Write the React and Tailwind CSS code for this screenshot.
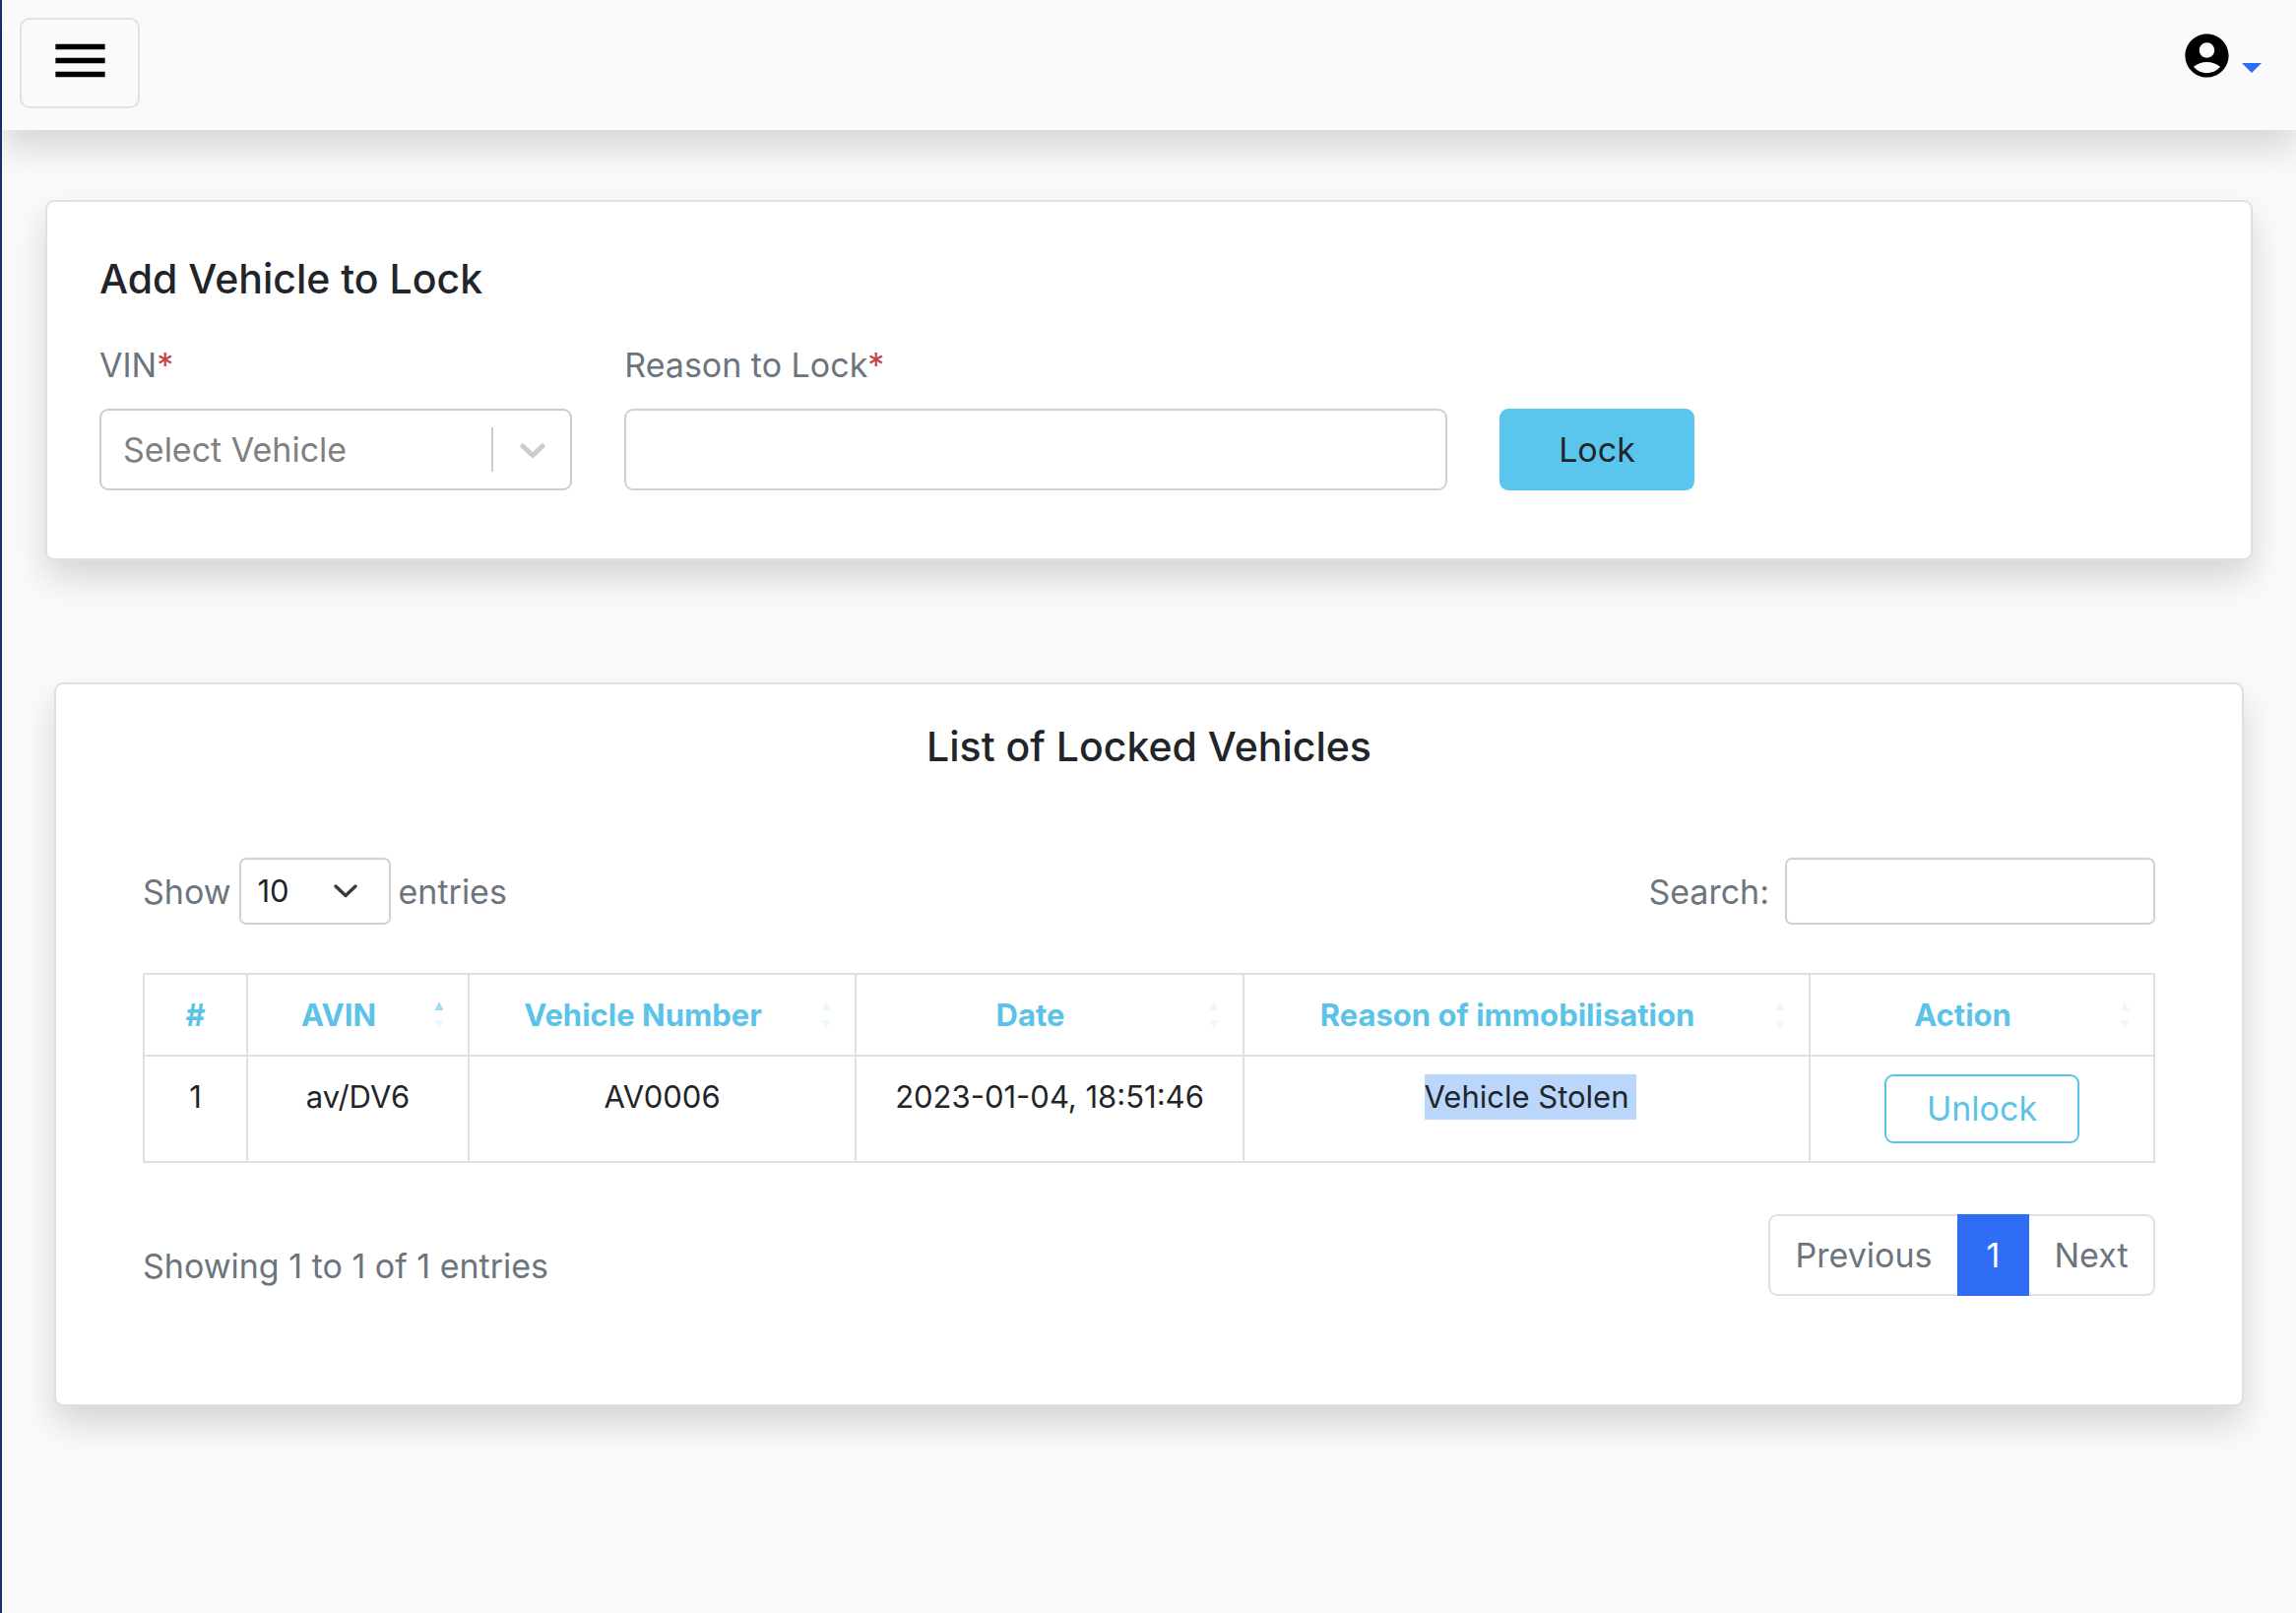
import { useState } from 'react';
import { MdAccountCircle, MdMenu } from 'react-icons/md';

const COLUMNS = [
  { label: '#', width: 'w-[105px]', sort: null },
  { label: 'AVIN', width: 'w-[225px]', sort: 'asc' },
  { label: 'Vehicle Number', width: 'w-[393px]', sort: 'none' },
  { label: 'Date', width: 'w-[394px]', sort: 'none' },
  { label: 'Reason of immobilisation', width: 'w-[575px]', sort: 'none' },
  { label: 'Action', width: 'w-[350px]', sort: 'none' },
];

const LOCKED_VEHICLES = [
  { id: 1, avin: 'av/DV6', number: 'AV0006', date: '2023-01-04, 18:51:46', reason: 'Vehicle Stolen' },
];

function SortArrows({ sort }) {
  return (
    <svg className="absolute right-6 top-1/2 -translate-y-1/2 w-[10px] h-[30px]" viewBox="0 0 10 30" aria-hidden="true">
      <path d="M5 1L9.5 10H0.5Z" fill={sort === 'asc' ? '#9fdcf4' : '#e8f8fc'} />
      <path d="M5 29L9.5 20H0.5Z" fill="#ecf9fd" />
    </svg>
  );
}

function Header() {
  return (
    <header className="flex items-start justify-between h-[132px] pl-[18px] pr-[35px] pt-[18px] bg-[#f9fafc] shadow-[0_18px_35px_rgba(0,0,0,0.15)]">
      <button type="button" aria-label="Toggle menu" className="flex justify-center w-[122px] h-[92px] pt-2 border-2 border-[#dfe1e3] rounded-[10px] text-black">
        <MdMenu className="w-[67px] h-[67px]" />
      </button>
      <button type="button" aria-label="Account menu" className="flex items-center gap-[9px] pt-3 text-black">
        <MdAccountCircle className="w-[53px] h-[53px]" />
        <svg className="w-5 h-[10px] mt-6 text-[#2f6cf6]" viewBox="0 0 20 10" aria-hidden="true">
          <path d="M0 0H20L10 10Z" fill="currentColor" />
        </svg>
      </button>
    </header>
  );
}

function LockForm() {
  const [reason, setReason] = useState('');

  return (
    <section className="mx-11 mt-[71px] pt-[52px] pb-[69px] pl-[53px] pr-[105px] bg-white border-2 border-[#dfe0e1] rounded-[9px] shadow-[0_18px_35px_rgba(0,0,0,0.15)]">
      <h5 className="text-[41px] leading-[53px] font-medium text-[#212529]">Add Vehicle to Lock</h5>
      <form className="grid grid-cols-12 gap-[53px] items-end mt-[34px]" onSubmit={(e) => e.preventDefault()}>
        <div className="col-span-3">
          <label htmlFor="vin" className="block mb-[18px] leading-[53px]">
            VIN<span className="text-[#c6404d]">*</span>
          </label>
          <div className="relative">
            <select id="vin" defaultValue="" className="appearance-none w-full h-[83px] px-[22px] bg-white border-2 border-[#cccccc] rounded-[9px] text-[#808080]">
              <option value="">Select Vehicle</option>
            </select>
            <span className="absolute right-20 top-[19px] w-[2px] h-[45px] bg-[#cccccc]" />
            <svg className="absolute right-[27px] top-[35px] w-[26px] h-4" viewBox="0 0 26 16" fill="none" aria-hidden="true">
              <path d="M3 3L13 12.5L23 3" stroke="#cccccc" strokeWidth="5" strokeLinecap="round" strokeLinejoin="round" />
            </svg>
          </div>
        </div>
        <div className="col-span-5">
          <label htmlFor="reason" className="block mb-[18px] leading-[53px]">
            Reason to Lock<span className="text-[#c6404d]">*</span>
          </label>
          <input
            id="reason"
            type="text"
            value={reason}
            onChange={(e) => setReason(e.target.value)}
            className="block w-full h-[83px] px-[26px] bg-white border-2 border-[#ced2d5] rounded-[9px] outline-none"
          />
        </div>
        <div className="col-span-4">
          <button type="submit" className="block w-[198px] h-[83px] rounded-[9px] bg-[#5bc6ed] text-[#212529]">
            Lock
          </button>
        </div>
      </form>
    </section>
  );
}

function LockedVehicles() {
  const [search, setSearch] = useState('');

  return (
    <section className="mx-[53px] mt-[124px] pt-[37px] pb-[110px] px-[88px] bg-white border-2 border-[#dfe0e1] rounded-[9px] shadow-[0_18px_35px_rgba(0,0,0,0.15)]">
      <h5 className="text-[41px] leading-[53px] font-medium text-center text-[#212529]">List of Locked Vehicles</h5>

      <div className="flex items-center justify-between mt-[86px]">
        <label className="flex items-center gap-2">
          Show
          <span className="relative">
            <select defaultValue="10" className="block appearance-none w-[154px] h-[68px] pl-[17px] bg-white border-2 border-[#ced2d5] rounded-[7px] text-[31px] text-[#212529]">
              <option>10</option>
              <option>25</option>
              <option>50</option>
              <option>100</option>
            </select>
            <svg className="absolute right-[34px] top-[27px] w-6 h-[14px]" viewBox="0 0 24 14" fill="none" aria-hidden="true">
              <path d="M2 2L12 11.5L22 2" stroke="#343a40" strokeWidth="3.4" strokeLinecap="round" strokeLinejoin="round" />
            </svg>
          </span>
          entries
        </label>
        <label className="flex items-center gap-4">
          Search:
          <input
            type="search"
            value={search}
            onChange={(e) => setSearch(e.target.value)}
            className="block w-[376px] h-[68px] px-[18px] bg-white border-2 border-[#ced2d5] rounded-[7px] outline-none"
          />
        </label>
      </div>

      <table className="table-fixed w-full mt-[49px] border-collapse text-[31px] leading-[46px] text-[#212529]">
        <thead>
          <tr>
            {COLUMNS.map((col) => (
              <th key={col.label} className={`${col.width} border-2 border-[#dee0e2] p-0 font-bold text-[#5bc3e8]`}>
                <div className={`relative pt-[18px] pb-[17px] ${col.sort ? 'pl-[18px] pr-[57px]' : ''}`}>
                  {col.label}
                  {col.sort && <SortArrows sort={col.sort} />}
                </div>
              </th>
            ))}
          </tr>
        </thead>
        <tbody>
          {LOCKED_VEHICLES.map((v) => (
            <tr key={v.id} className="text-center align-top [&>td]:border-2 [&>td]:border-[#dee0e2] [&>td]:py-[18px]">
              <td>{v.id}</td>
              <td>{v.avin}</td>
              <td>{v.number}</td>
              <td>{v.date}</td>
              <td>
                <mark className="inline-block align-top -mr-2 pr-2 bg-[#bad6fb] text-[#212529]">{v.reason}</mark>
              </td>
              <td>
                <button type="button" className="block mx-auto w-[198px] h-[70px] border-2 border-[#5bc3e8] rounded-[9px] text-[34px] text-[#5bc3e8]">
                  Unlock
                </button>
              </td>
            </tr>
          ))}
        </tbody>
      </table>

      <div className="flex items-start justify-between mt-[52px]">
        <p className="pt-[26px] leading-[53px]">Showing 1 to 1 of 1 entries</p>
        <nav aria-label="Table pages" className="flex h-[83px]">
          <button type="button" className="w-[192px] border-2 border-r-0 border-[#dee2e6] rounded-l-[9px]">Previous</button>
          <button type="button" className="w-[73px] bg-[#2f6df6] text-white">1</button>
          <button type="button" className="w-[128px] border-2 border-l-0 border-[#dee2e6] rounded-r-[9px]">Next</button>
        </nav>
      </div>
    </section>
  );
}

export default function App() {
  return (
    <div className="min-h-screen border-l-2 border-[#12336f] bg-[#f9fafc] font-[Inter,sans-serif] text-[34px] text-[#6c757d]">
      <Header />
      <main>
        <LockForm />
        <LockedVehicles />
      </main>
    </div>
  );
}
